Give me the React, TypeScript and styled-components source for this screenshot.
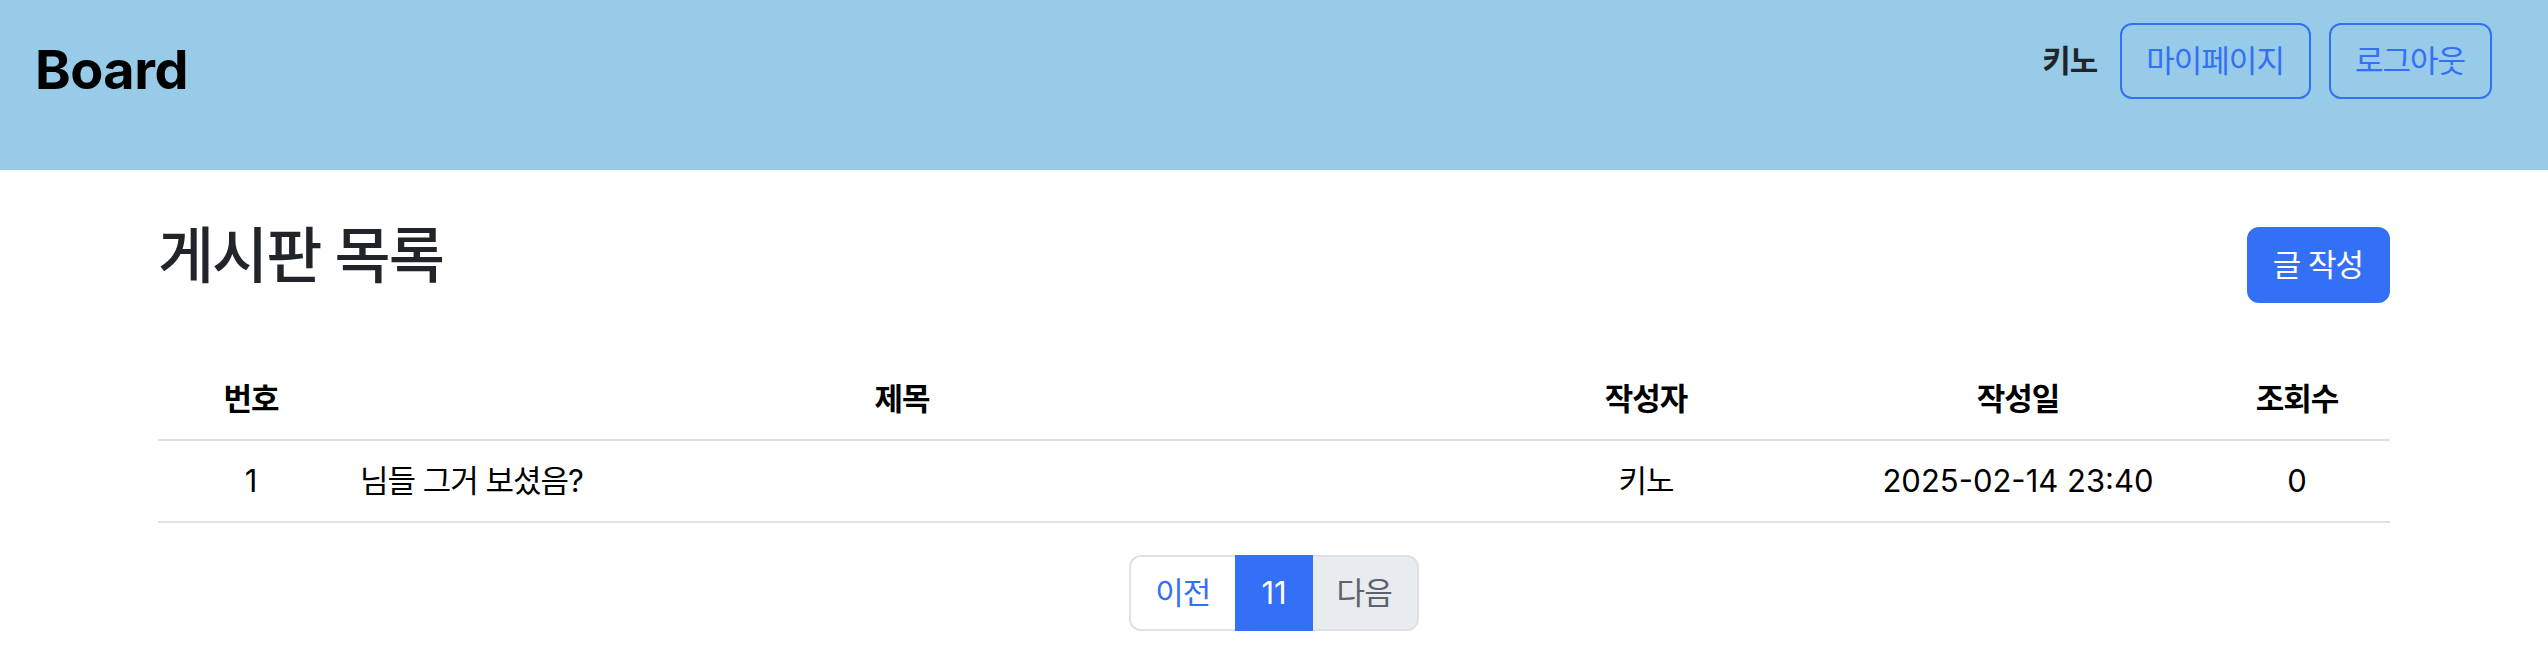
import React from "react";
import styled, { createGlobalStyle } from "styled-components";

const GlobalStyle = createGlobalStyle`
  html, body {
    margin: 0;
    padding: 0;
    background: #ffffff;
  }
  body {
    font-family: Inter, "Noto Sans CJK KR", sans-serif;
    font-size: 32px;
    line-height: 1.5;
    color: #212529;
  }
  * {
    box-sizing: border-box;
  }
`;

const BLUE = "#3470f5";
const LINE = "#dee2e6";
// Hangul tracking, tightened a little to match the original's narrower Korean face
const KO_TRACK = "-1px";

type Post = {
  id: number;
  title: string;
  author: string;
  createdAt: string;
  views: number;
};

const posts: Post[] = [
  { id: 1, title: "님들 그거 보셨음?", author: "키노", createdAt: "2025-02-14 23:40", views: 0 },
];

export default function App() {
  return (
    <>
      <GlobalStyle />
      <Header>
        <Brand>Board</Brand>
        <NavRight>
          <UserName>키노</UserName>
          <OutlineButton>마이페이지</OutlineButton>
          <OutlineButton>로그아웃</OutlineButton>
        </NavRight>
      </Header>
      <Main>
        <TitleRow>
          <PageTitle>게시판 목록</PageTitle>
          <PrimaryButton>글 작성</PrimaryButton>
        </TitleRow>
        <Table>
          <colgroup>
            <Col $span={1} />
            <Col $span={6} />
            <Col $span={2} />
            <Col $span={2} />
            <Col $span={1} />
          </colgroup>
          <thead>
            <tr>
              <Th>번호</Th>
              <Th>제목</Th>
              <Th>작성자</Th>
              <Th>작성일</Th>
              <Th>조회수</Th>
            </tr>
          </thead>
          <tbody>
            {posts.map(p => (
              <tr key={p.id}>
                <Td $latin>{p.id}</Td>
                <Td $left>{p.title}</Td>
                <Td>{p.author}</Td>
                <Td $latin>{p.createdAt}</Td>
                <Td $latin>{p.views}</Td>
              </tr>
            ))}
          </tbody>
        </Table>
        <Pagination>
          <PageItem $first>이전</PageItem>
          <PageItem $active $latin>11</PageItem>
          <PageItem $last $disabled>다음</PageItem>
        </Pagination>
      </Main>
    </>
  );
}

const Header = styled.header`
  height: 170px;
  background: #97cbe7;
  display: flex;
  justify-content: space-between;
  align-items: flex-start;
  padding: 23px 56px 0 35px;
`;

const Brand = styled.div`
  margin-top: 15px;
  font-family: Inter, "Liberation Sans", sans-serif;
  font-weight: 700;
  font-size: 54px;
  line-height: 1.2;
  color: #000;
  letter-spacing: -0.5px;
`;

const NavRight = styled.div`
  display: flex;
  align-items: center;
  gap: 18px;
`;

const UserName = styled.span`
  margin-right: 5px;
  font-weight: 700;
  font-size: 31px;
  letter-spacing: ${KO_TRACK};
  color: #212529;
`;

const OutlineButton = styled.button`
  font-family: inherit;
  font-size: 31px;
  line-height: 48px;
  letter-spacing: ${KO_TRACK};
  padding: 12px 25px 12px 24px;
  border: 2px solid ${BLUE};
  border-radius: 12px;
  background: transparent;
  color: ${BLUE};
  cursor: pointer;
`;

const Main = styled.main`
  max-width: 2232px;
  margin: 48px auto 0;
`;

const TitleRow = styled.div`
  display: flex;
  justify-content: space-between;
  align-items: center;
  margin-bottom: 48px;
`;

const PageTitle = styled.h2`
  margin: 0 0 16px;
  font-size: 61px;
  font-weight: 500;
  line-height: 77px;
  letter-spacing: -2px;
  color: #212529;
`;

const PrimaryButton = styled.button`
  font-family: inherit;
  font-size: 31px;
  line-height: 48px;
  letter-spacing: ${KO_TRACK};
  padding: 12px 25px 12px 24px;
  border: 2px solid ${BLUE};
  border-radius: 12px;
  background: ${BLUE};
  color: #fff;
  cursor: pointer;
`;

const Table = styled.table`
  width: 100%;
  table-layout: fixed;
  border-collapse: collapse;
  margin-bottom: 32px;
  color: #000;
`;

const Col = styled.col<{ $span: number }>`
  width: ${p => (p.$span / 12) * 100}%;
`;

const Th = styled.th`
  padding: 16px;
  font-size: 31px;
  font-weight: 700;
  line-height: 48px;
  letter-spacing: ${KO_TRACK};
  text-align: center;
  border-bottom: 2px solid ${LINE};
`;

const Td = styled.td<{ $left?: boolean; $latin?: boolean }>`
  padding: 16px;
  font-size: 31px;
  line-height: 48px;
  letter-spacing: ${p => (p.$latin ? "0" : KO_TRACK)};
  text-align: ${p => (p.$left ? "left" : "center")};
  border-bottom: 2px solid ${LINE};
`;

const Pagination = styled.nav`
  display: flex;
  justify-content: center;
`;

const PageItem = styled.span<{
  $first?: boolean;
  $last?: boolean;
  $active?: boolean;
  $disabled?: boolean;
  $latin?: boolean;
}>`
  display: block;
  padding: 12px 24px;
  font-size: 31px;
  line-height: 48px;
  letter-spacing: ${p => (p.$latin ? "0" : KO_TRACK)};
  padding-right: ${p => (p.$latin ? "24px" : "25px")};
  border: 2px solid ${p => (p.$active ? BLUE : LINE)};
  margin-left: ${p => (p.$first ? "0" : "-2px")};
  border-radius: ${p => (p.$first ? "12px 0 0 12px" : p.$last ? "0 12px 12px 0" : "0")};
  background: ${p => (p.$active ? BLUE : p.$disabled ? "#e9ecef" : "#fff")};
  color: ${p => (p.$active ? "#fff" : p.$disabled ? "#5c636a" : BLUE)};
  position: relative;
  z-index: ${p => (p.$active ? 1 : 0)};
`;
